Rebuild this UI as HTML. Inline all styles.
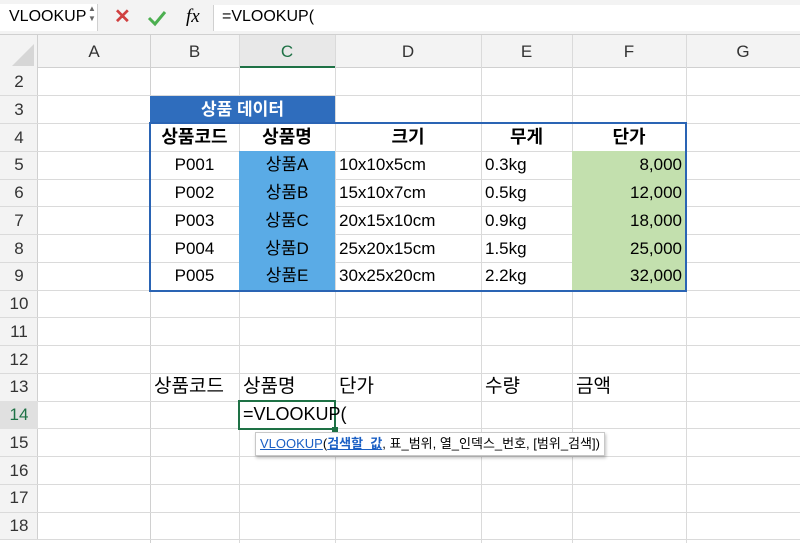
<!DOCTYPE html>
<html><head><meta charset="utf-8"><style>
*{margin:0;padding:0;box-sizing:border-box}
body{width:800px;height:543px;overflow:hidden;background:#fff;font-family:"Liberation Sans","Noto Sans CJK KR",sans-serif;position:relative;color:#000}
.a{position:absolute}
.h{position:absolute;left:0;width:800px;height:1px;background:#dadada}
.v{position:absolute;top:35px;height:508px;width:1px;background:#dadada}
.rn{position:absolute;left:0;width:38px;text-align:center;font-size:17px;color:#333;line-height:27.75px;height:27.75px}
.c{position:absolute;height:27.75px;line-height:27.75px;font-size:17px;white-space:nowrap;overflow:visible}
.ctr{text-align:center}.r{text-align:right;padding-right:4px}.l{padding-left:4px}
.b{font-weight:bold}
.big{font-size:18px}
</style></head><body>
<div class="a" style="left:0;top:0;width:800px;height:35px;background:#f3f3f3;border-bottom:1px solid #d0d0d0"></div>
<div class="a" style="left:0;top:4px;width:98px;height:27px;background:#fff;border-right:1px solid #d0d0d0"></div>
<div class="a" style="left:9px;top:6px;font-size:16px;line-height:22px">VLOOKUP</div>
<div class="a" style="left:88px;top:4px;font-size:8px;color:#666;line-height:10px">▲<br>▼</div>
<div class="a" style="left:114px;top:5px;font-size:20px;color:#d04040;line-height:24px;font-weight:bold">✕</div>
<svg class="a" style="left:146px;top:9px" width="22" height="18" viewBox="0 0 22 18"><path d="M3 9 L9 15 L19 3" fill="none" stroke="#4caf50" stroke-width="3"/></svg>
<div class="a" style="left:186px;top:4px;font-size:19px;font-style:italic;font-family:'Liberation Serif',serif;line-height:26px">fx</div>
<div class="a" style="left:213px;top:5px;width:587px;height:26px;background:#fff;border-left:1px solid #d0d0d0"></div>
<div class="a" style="left:222px;top:6px;font-size:16px;line-height:22px">=VLOOKUP(</div>
<div class="a" style="left:0;top:35px;width:800px;height:33px;background:#f3f3f3;border-bottom:1px solid #d0d0d0"></div>
<div class="a" style="left:0;top:35px;width:38px;height:505px;background:#f3f3f3;border-right:1px solid #d0d0d0"></div>
<div class="a" style="left:12px;top:44px;width:0;height:0;border-left:22px solid transparent;border-bottom:22px solid #d6d6d6"></div>
<div class="a" style="left:239px;top:35px;width:96px;height:33px;background:#e8e8e8;border-bottom:2px solid #1e7145"></div>
<div class="a" style="left:38px;top:35px;width:762px;height:33px;font-size:17px;color:#333;line-height:33px">
<span class="a" style="left:0;width:112px;text-align:center">A</span>
<span class="a" style="left:112px;width:89px;text-align:center">B</span>
<span class="a" style="left:201px;width:96px;text-align:center;color:#1e7145">C</span>
<span class="a" style="left:297px;width:146px;text-align:center">D</span>
<span class="a" style="left:443px;width:91px;text-align:center">E</span>
<span class="a" style="left:534px;width:114px;text-align:center">F</span>
<span class="a" style="left:648px;width:114px;text-align:center">G</span>
</div>
<div class="v" style="left:150px;background:#d0d0d0"></div>
<div class="v" style="left:239px"></div>
<div class="v" style="left:335px"></div>
<div class="v" style="left:481px"></div>
<div class="v" style="left:572px"></div>
<div class="v" style="left:686px"></div>
<div class="h" style="top:95px"></div><div class="h" style="top:123px"></div><div class="h" style="top:151px"></div>
<div class="h" style="top:179px"></div><div class="h" style="top:206px"></div><div class="h" style="top:234px"></div>
<div class="h" style="top:262px"></div><div class="h" style="top:290px"></div><div class="h" style="top:317px"></div>
<div class="h" style="top:345px"></div><div class="h" style="top:373px"></div><div class="h" style="top:401px"></div>
<div class="h" style="top:428px"></div><div class="h" style="top:456px"></div><div class="h" style="top:484px"></div>
<div class="h" style="top:512px"></div><div class="h" style="top:539px"></div>
<div class="rn" style="top:68px">2</div><div class="rn" style="top:95.75px">3</div><div class="rn" style="top:123.5px">4</div>
<div class="rn" style="top:151.25px">5</div><div class="rn" style="top:179px">6</div><div class="rn" style="top:206.75px">7</div>
<div class="rn" style="top:234.5px">8</div><div class="rn" style="top:262.25px">9</div><div class="rn" style="top:290px">10</div>
<div class="rn" style="top:317.75px">11</div><div class="rn" style="top:345.5px">12</div><div class="rn" style="top:373.25px">13</div>
<div class="rn" style="top:401px;background:#e0e0e0;color:#1e7145">14</div><div class="rn" style="top:428.75px">15</div><div class="rn" style="top:456.5px">16</div>
<div class="rn" style="top:484.25px">17</div><div class="rn" style="top:512px">18</div>
<div class="a" style="left:150px;top:96px;width:185px;height:27px;background:#2f6dbd"></div>
<div class="c ctr b" style="left:150px;top:95.75px;width:185px;color:#fff">상품 데이터</div>
<div class="a" style="left:239px;top:151px;width:96px;height:139px;background:#5aabe6"></div>
<div class="a" style="left:572px;top:151px;width:114px;height:139px;background:#c3e0ae"></div>
<div class="a" style="left:149px;top:122px;width:538px;height:170px;border:2.5px solid #2a64b4"></div>
<div class="c ctr b big" style="left:150px;top:123.5px;width:89px">상품코드</div>
<div class="c ctr b big" style="left:239px;top:123.5px;width:96px">상품명</div>
<div class="c ctr b big" style="left:335px;top:123.5px;width:146px">크기</div>
<div class="c ctr b big" style="left:481px;top:123.5px;width:91px">무게</div>
<div class="c ctr b big" style="left:572px;top:123.5px;width:114px">단가</div>
<div class="c ctr" style="left:150px;top:151.25px;width:89px">P001</div><div class="c ctr" style="left:239px;top:151.25px;width:96px">상품A</div><div class="c l" style="left:335px;top:151.25px">10x10x5cm</div><div class="c l" style="left:481px;top:151.25px">0.3kg</div><div class="c r" style="left:572px;top:151.25px;width:114px">8,000</div>
<div class="c ctr" style="left:150px;top:179px;width:89px">P002</div><div class="c ctr" style="left:239px;top:179px;width:96px">상품B</div><div class="c l" style="left:335px;top:179px">15x10x7cm</div><div class="c l" style="left:481px;top:179px">0.5kg</div><div class="c r" style="left:572px;top:179px;width:114px">12,000</div>
<div class="c ctr" style="left:150px;top:206.75px;width:89px">P003</div><div class="c ctr" style="left:239px;top:206.75px;width:96px">상품C</div><div class="c l" style="left:335px;top:206.75px">20x15x10cm</div><div class="c l" style="left:481px;top:206.75px">0.9kg</div><div class="c r" style="left:572px;top:206.75px;width:114px">18,000</div>
<div class="c ctr" style="left:150px;top:234.5px;width:89px">P004</div><div class="c ctr" style="left:239px;top:234.5px;width:96px">상품D</div><div class="c l" style="left:335px;top:234.5px">25x20x15cm</div><div class="c l" style="left:481px;top:234.5px">1.5kg</div><div class="c r" style="left:572px;top:234.5px;width:114px">25,000</div>
<div class="c ctr" style="left:150px;top:262.25px;width:89px">P005</div><div class="c ctr" style="left:239px;top:262.25px;width:96px">상품E</div><div class="c l" style="left:335px;top:262.25px">30x25x20cm</div><div class="c l" style="left:481px;top:262.25px">2.2kg</div><div class="c r" style="left:572px;top:262.25px;width:114px">32,000</div>
<div class="c l big" style="left:150px;top:373.25px;font-size:19px">상품코드</div>
<div class="c l big" style="left:239px;top:373.25px;font-size:19px">상품명</div>
<div class="c l big" style="left:335px;top:373.25px;font-size:19px">단가</div>
<div class="c l big" style="left:481px;top:373.25px;font-size:19px">수량</div>
<div class="c l big" style="left:572px;top:373.25px;font-size:19px">금액</div>
<div class="a" style="left:238px;top:400px;width:98px;height:30px;border:2px solid #1e7145"></div>
<div class="a" style="left:332px;top:427px;width:6px;height:6px;background:#1e7145"></div>
<div class="c" style="left:243px;top:401px;font-size:18px">=VLOOKUP(</div>
<div class="a" style="left:255px;top:432px;width:350px;height:24px;background:#fff;border:1px solid #c8c8c8;box-shadow:1px 2px 3px rgba(0,0,0,.25);font-size:13px;line-height:22px;padding-left:4px;white-space:nowrap"><span style="color:#1a5fc4;text-decoration:underline">VLOOKUP</span>(<span style="color:#1a5fc4;text-decoration:underline;font-weight:bold">검색할_값</span>, 표_범위, 열_인덱스_번호, [범위_검색])</div>
</body></html>
